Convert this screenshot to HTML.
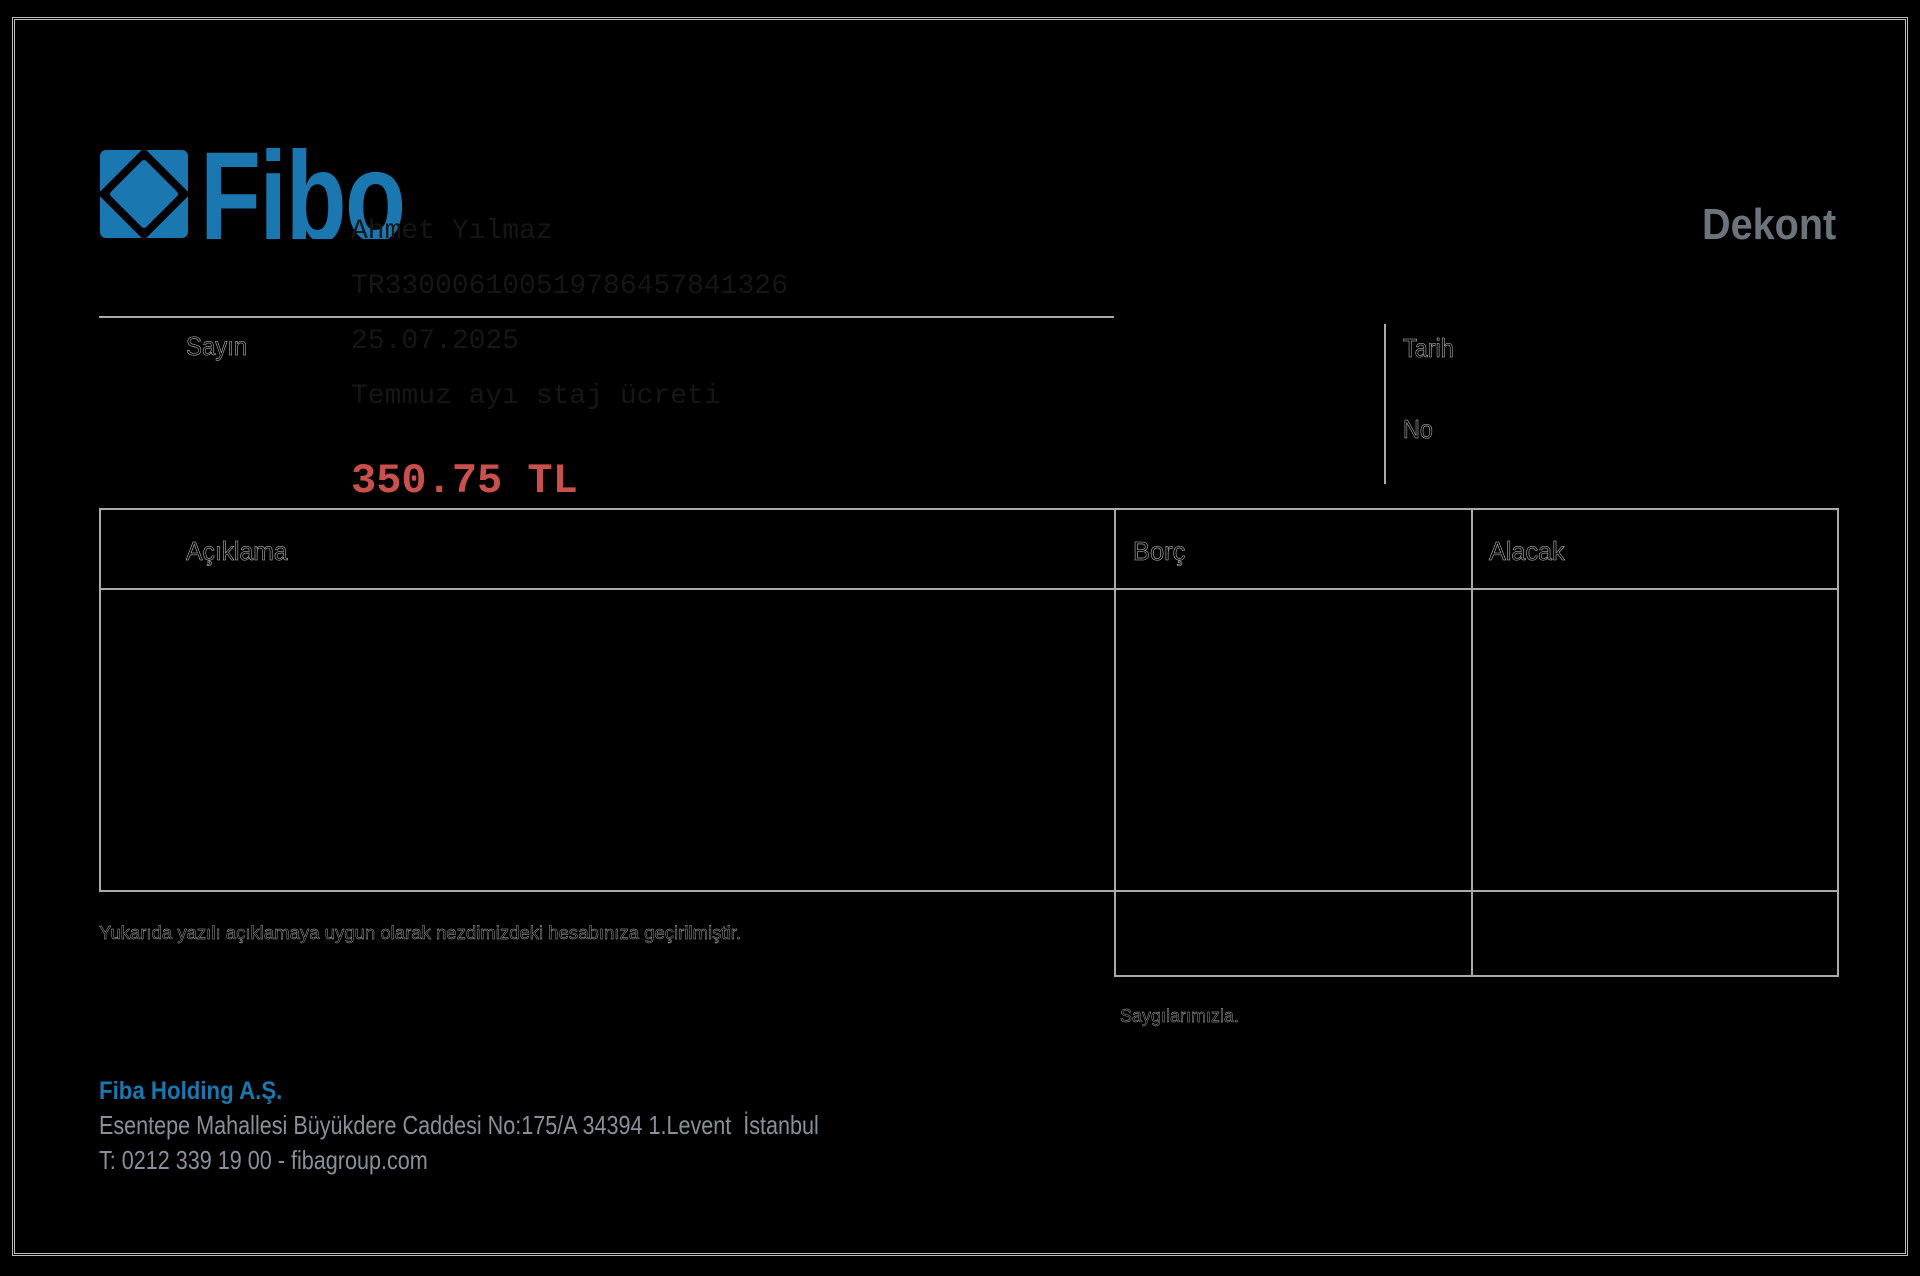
<!DOCTYPE html>
<html><head><meta charset="utf-8"><style>
html,body{margin:0;padding:0;background:#000;}
body{width:1920px;height:1276px;position:relative;overflow:hidden;font-family:"Liberation Sans",sans-serif;}
.a{position:absolute;white-space:nowrap;}
.mono{font-family:"Liberation Mono",monospace;font-size:28px;color:#161616;line-height:1;}
.cond{transform-origin:left center;}
.ol{color:#000;-webkit-text-stroke:0.55px #c8c8c8;}
.hl{position:absolute;background:#aaa;}
</style></head><body>
<div style="position:absolute;left:12px;top:17px;width:1890px;height:1233px;border:3px double #bbb;"></div>

<svg class="a" style="left:100px;top:150px" width="88" height="88" viewBox="0 0 88 88">
<rect x="0" y="0" width="88" height="88" rx="6" fill="#1a77b0"/>
<path d="M44 2 L86 44 L44 86 L2 44 Z" fill="#000" stroke="#000" stroke-width="6" stroke-linejoin="round"/>
<path d="M44 13 L75 44 L44 75 L13 44 Z" fill="#1a77b0" stroke="#1a77b0" stroke-width="6" stroke-linejoin="round"/>
</svg>
<div class="a cond" style="left:200px;top:134px;font-size:128px;font-weight:bold;color:#1a77b0;line-height:1;transform:scaleX(0.78);height:105px;overflow:hidden;letter-spacing:-2px;">Fibo</div>

<div class="a mono" style="left:351px;top:218px;">Ahmet Yılmaz</div>
<div class="a mono" style="left:351px;top:273px;">TR330006100519786457841326</div>
<div class="a mono" style="left:351px;top:328px;">25.07.2025</div>
<div class="a mono" style="left:351px;top:383px;">Temmuz ayı staj ücreti</div>
<div class="a" style="left:351px;top:460px;font-family:'Liberation Mono',monospace;font-size:42px;font-weight:bold;color:#c9504c;line-height:1;">350.75 TL</div>

<div class="hl" style="left:99px;top:316px;width:1015px;height:2px;"></div>
<div class="a cond ol" style="left:186px;top:331px;font-size:26px;transform:scaleX(0.92);">Sayın</div>

<div class="a cond" style="left:1702px;top:200px;font-size:44px;font-weight:bold;color:#6b737b;transform:scaleX(0.9);">Dekont</div>

<div class="hl" style="left:1384px;top:324px;width:2px;height:160px;"></div>
<div class="a cond ol" style="left:1403px;top:333px;font-size:26px;transform:scaleX(0.9);">Tarih</div>
<div class="a cond ol" style="left:1403px;top:414px;font-size:26px;transform:scaleX(0.9);">No</div>

<div style="position:absolute;left:99px;top:508px;width:1736px;height:380px;border:2px solid #aaa;"></div>
<div class="hl" style="left:99px;top:588px;width:1738px;height:2px;"></div>
<div class="hl" style="left:1114px;top:508px;width:2px;height:468px;"></div>
<div class="hl" style="left:1471px;top:508px;width:2px;height:468px;"></div>
<div style="position:absolute;left:1114px;top:888px;width:721px;height:87px;border:2px solid #aaa;border-top:none;"></div>

<div class="a cond ol" style="left:186px;top:536px;font-size:26px;transform:scaleX(0.95);">Açıklama</div>
<div class="a cond ol" style="left:1133px;top:536px;font-size:26px;transform:scaleX(0.98);">Borç</div>
<div class="a cond ol" style="left:1489px;top:536px;font-size:26px;transform:scaleX(0.97);">Alacak</div>

<div class="a cond ol" style="left:99px;top:923px;font-size:18px;transform:scaleX(1.03);-webkit-text-stroke:0.4px #bbb;">Yukarıda yazılı açıklamaya uygun olarak nezdimizdeki hesabınıza geçirilmiştir.</div>
<div class="a cond ol" style="left:1120px;top:1006px;font-size:18px;transform:scaleX(1.0);-webkit-text-stroke:0.4px #bbb;">Saygılarımızla.</div>

<div class="a cond" style="left:99px;top:1077px;font-size:25px;font-weight:bold;color:#1a77b0;transform:scaleX(0.89);">Fiba Holding A.Ş.</div>
<div class="a cond" style="left:99px;top:1110px;font-size:26px;color:#8a9099;transform:scaleX(0.83);">Esentepe Mahallesi Büyükdere Caddesi No:175/A 34394 1.Levent &nbsp;İstanbul</div>
<div class="a cond" style="left:99px;top:1145px;font-size:26px;color:#8a9099;transform:scaleX(0.83);">T: 0212 339 19 00 - fibagroup.com</div>
</body></html>
